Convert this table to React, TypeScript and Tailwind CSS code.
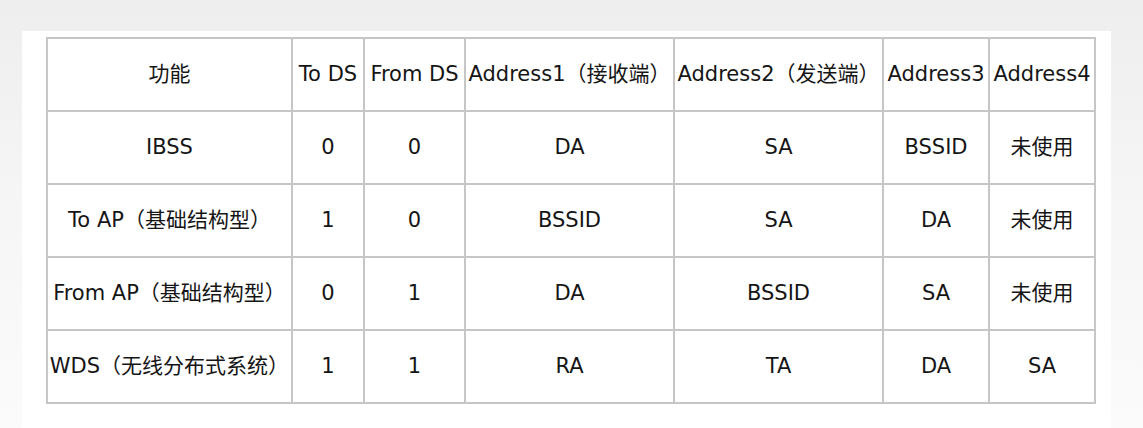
export default function App() {
  const header = [
    "功能",
    "To DS",
    "From DS",
    "Address1（接收端）",
    "Address2（发送端）",
    "Address3",
    "Address4",
  ];

  const rows = [
    ["IBSS", "0", "0", "DA", "SA", "BSSID", "未使用"],
    ["To AP（基础结构型）", "1", "0", "BSSID", "SA", "DA", "未使用"],
    ["From AP（基础结构型）", "0", "1", "DA", "BSSID", "SA", "未使用"],
    ["WDS（无线分布式系统）", "1", "1", "RA", "TA", "DA", "SA"],
  ];

  const widths = [245, 72, 101, 209, 209, 106, 106];

  return (
    <div
      className="h-[428px] w-[1143px] overflow-hidden bg-gradient-to-b from-[#eeeeee] via-[#f6f6f6] to-[#fbfbfb] pt-[31px] pl-[22px]"
      style={{ fontFamily: '"DejaVu Sans", "Noto Sans CJK SC", sans-serif' }}
    >
      <div className="h-[397px] w-[1089px] bg-white pt-[6px] pl-[24px]">
        <table className="table-fixed border-collapse border-2 border-[#c6c6c6] text-[21px] text-[#151515]">
          <colgroup>
            {widths.map((w, i) => (
              <col key={i} style={{ width: w }} />
            ))}
          </colgroup>
          <thead>
            <tr className="h-[73px]">
              {header.map((h, i) => (
                <th
                  key={i}
                  className="whitespace-nowrap border-2 border-[#c6c6c6] p-0 text-center font-normal"
                >
                  {h}
                </th>
              ))}
            </tr>
          </thead>
          <tbody>
            {rows.map((r, ri) => (
              <tr key={ri} className="h-[73px]">
                {r.map((c, ci) => (
                  <td
                    key={ci}
                    className="whitespace-nowrap border-2 border-[#c6c6c6] p-0 text-center"
                  >
                    {c}
                  </td>
                ))}
              </tr>
            ))}
          </tbody>
        </table>
      </div>
    </div>
  );
}
